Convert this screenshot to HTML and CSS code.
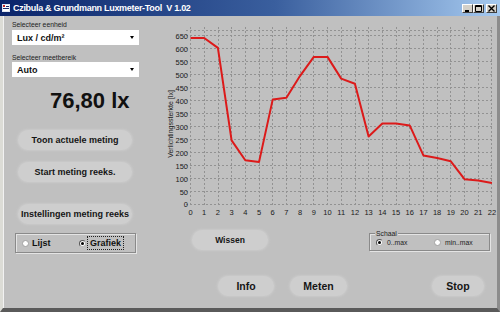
FILE: index.html
```html
<!DOCTYPE html>
<html lang="nl">
<head>
    <meta charset="UTF-8">
    <meta name="viewport" content="width=device-width, initial-scale=1.0">
    <title>Czibula &amp; Grundmann Luxmeter-Tool</title>
    <link rel="stylesheet" href="styles.css">
</head>
<body>
    <div class="window">
        <div class="titlebar">
            <svg class="app-icon" width="8" height="8" viewBox="0 0 8 8">
                <rect x="0.5" y="0.5" width="7" height="7" fill="#fff" stroke="#dfe6f2"/>
                <rect x="1" y="1" width="2" height="2" fill="#c02020"/>
                <rect x="4" y="2" width="3" height="1" fill="#1a2a6a"/>
                <rect x="1" y="4" width="6" height="1" fill="#1a2a6a"/>
            </svg>
            <span class="title">Czibula &amp; Grundmann Luxmeter-Tool&nbsp; V 1.02</span>
            <div class="caption-buttons">
                <span class="cap-btn">
                    <svg width="7" height="7" viewBox="0 0 7 7"><rect x="1" y="5" width="4" height="2" fill="#000"/></svg>
                </span>
                <span class="cap-btn">
                    <svg width="7" height="7" viewBox="0 0 7 7"><path d="M0.5 0.5h6v6h-6z M0.5 1.5h6" fill="none" stroke="#000"/></svg>
                </span>
                <span class="cap-btn close">
                    <svg width="7" height="7" viewBox="0 0 7 7"><path d="M0.5 0.5l6 6 M6.5 0.5l-6 6" stroke="#000" stroke-width="1.4"/></svg>
                </span>
            </div>
        </div>

        <div class="client">
            <div class="main">
                <div class="left">
                    <div class="label">Selecteer eenheid</div>
                    <div class="select"><span>Lux / cd/m²</span><span class="arrow"></span></div>
                    <div class="label second">Selecteer meetbereik</div>
                    <div class="select"><span>Auto</span><span class="arrow"></span></div>

                    <div class="reading">76,80 lx</div>

                    <div class="btn side first">Toon actuele meting</div>
                    <div class="btn side">Start meting reeks.</div>
                    <div class="btn side spaced">Instellingen meting reeks</div>

                    <div class="groupbox view">
                        <div class="option wide"><span class="radio"></span><b>Lijst</b></div>
                        <div class="option"><span class="radio checked"></span><b class="focus">Grafiek</b></div>
                    </div>
                </div>

                <div class="right">
                    <svg class="chart" width="340" height="208" viewBox="157 16 340 208">
                        <g class="grid">
                            <line x1="190.5" y1="27" x2="190.5" y2="205"/>
                            <line x1="204.5" y1="27" x2="204.5" y2="205"/>
                            <line x1="218.5" y1="27" x2="218.5" y2="205"/>
                            <line x1="231.5" y1="27" x2="231.5" y2="205"/>
                            <line x1="245.5" y1="27" x2="245.5" y2="205"/>
                            <line x1="259.5" y1="27" x2="259.5" y2="205"/>
                            <line x1="272.5" y1="27" x2="272.5" y2="205"/>
                            <line x1="286.5" y1="27" x2="286.5" y2="205"/>
                            <line x1="300.5" y1="27" x2="300.5" y2="205"/>
                            <line x1="313.5" y1="27" x2="313.5" y2="205"/>
                            <line x1="327.5" y1="27" x2="327.5" y2="205"/>
                            <line x1="341.5" y1="27" x2="341.5" y2="205"/>
                            <line x1="355.5" y1="27" x2="355.5" y2="205"/>
                            <line x1="368.5" y1="27" x2="368.5" y2="205"/>
                            <line x1="382.5" y1="27" x2="382.5" y2="205"/>
                            <line x1="396.5" y1="27" x2="396.5" y2="205"/>
                            <line x1="409.5" y1="27" x2="409.5" y2="205"/>
                            <line x1="423.5" y1="27" x2="423.5" y2="205"/>
                            <line x1="437.5" y1="27" x2="437.5" y2="205"/>
                            <line x1="450.5" y1="27" x2="450.5" y2="205"/>
                            <line x1="464.5" y1="27" x2="464.5" y2="205"/>
                            <line x1="478.5" y1="27" x2="478.5" y2="205"/>
                            <line x1="491.5" y1="27" x2="491.5" y2="205"/>

                            <line x1="186" y1="30.5" x2="494" y2="30.5"/>
                            <line x1="186" y1="35.5" x2="494" y2="35.5"/>
                            <line x1="186" y1="48.5" x2="494" y2="48.5"/>
                            <line x1="186" y1="61.5" x2="494" y2="61.5"/>
                            <line x1="186" y1="74.5" x2="494" y2="74.5"/>
                            <line x1="186" y1="87.5" x2="494" y2="87.5"/>
                            <line x1="186" y1="100.5" x2="494" y2="100.5"/>
                            <line x1="186" y1="113.5" x2="494" y2="113.5"/>
                            <line x1="186" y1="126.5" x2="494" y2="126.5"/>
                            <line x1="186" y1="139.5" x2="494" y2="139.5"/>
                            <line x1="186" y1="152.5" x2="494" y2="152.5"/>
                            <line x1="186" y1="165.5" x2="494" y2="165.5"/>
                            <line x1="186" y1="178.5" x2="494" y2="178.5"/>
                            <line x1="186" y1="191.5" x2="494" y2="191.5"/>
                            <line x1="186" y1="204.5" x2="494" y2="204.5"/>
                        </g>

                        <g class="ylabels">
                            <text x="188" y="38.5">650</text>
                            <text x="188" y="51.5">600</text>
                            <text x="188" y="64.5">550</text>
                            <text x="188" y="77.5">500</text>
                            <text x="188" y="90.5">450</text>
                            <text x="188" y="103.5">400</text>
                            <text x="188" y="116.5">350</text>
                            <text x="188" y="129.5">300</text>
                            <text x="188" y="142.5">250</text>
                            <text x="188" y="155.5">200</text>
                            <text x="188" y="168.5">150</text>
                            <text x="188" y="181.5">100</text>
                            <text x="188" y="194.5">50</text>
                            <text x="188" y="207">0</text>
                        </g>

                        <g class="xlabels">
                            <text x="190.5" y="215">0</text>
                            <text x="204.2" y="215">1</text>
                            <text x="217.9" y="215">2</text>
                            <text x="231.6" y="215">3</text>
                            <text x="245.3" y="215">4</text>
                            <text x="259" y="215">5</text>
                            <text x="272.7" y="215">6</text>
                            <text x="286.4" y="215">7</text>
                            <text x="300.1" y="215">8</text>
                            <text x="313.8" y="215">9</text>
                            <text x="327.5" y="215">10</text>
                            <text x="341.2" y="215">11</text>
                            <text x="354.9" y="215">12</text>
                            <text x="368.6" y="215">13</text>
                            <text x="382.3" y="215">14</text>
                            <text x="396" y="215">15</text>
                            <text x="409.7" y="215">16</text>
                            <text x="423.4" y="215">17</text>
                            <text x="437.1" y="215">18</text>
                            <text x="450.8" y="215">19</text>
                            <text x="464.5" y="215">20</text>
                            <text x="478.2" y="215">21</text>
                            <text x="491.9" y="215">22</text>
                        </g>

                        <text class="ytitle" transform="translate(173 124) rotate(-90)">Verlichtingssterkte [lx]</text>

                        <polyline class="series" points="190.5,38 204.2,38 217.9,47.9 231.6,140.4 245.3,160.3 259,162.1 272.7,99.6 286.4,97.8 300.1,75.8 313.8,56.9 327.5,56.9 341.2,78.6 354.9,83.8 368.6,136.5 382.3,123.6 396,123.6 409.7,125.4 423.4,155.4 437.1,158 450.8,161.3 464.5,179.2 478.2,180.5 491.9,183.1"/>
                    </svg>

                    <div class="chart-controls">
                        <div class="btn wissen">Wissen</div>
                        <div class="groupbox scale">
                            <span class="caption">Schaal</span>
                            <div class="options">
                                <div class="option wide"><span class="radio checked"></span>0..max</div>
                                <div class="option"><span class="radio"></span>min..max</div>
                            </div>
                        </div>
                    </div>
                </div>
            </div>

            <div class="bottombar">
                <div class="btn big info">Info</div>
                <div class="btn big meten">Meten</div>
                <div class="btn big stop">Stop</div>
            </div>
        </div>
    </div>
</body>
</html>
```

FILE: styles.css
```css
* {
    box-sizing: border-box;
    margin: 0;
    padding: 0;
}

body {
    width: 500px;
    height: 312px;
    overflow: hidden;
    background-color: #c0c0c0;
    font-family: "Liberation Sans", Arial, sans-serif;
    color: #111;
}

.window {
    width: 500px;
    height: 312px;
    display: flex;
    flex-direction: column;
    background-color: #c0c0c0;
}

/* title bar */
.titlebar {
    height: 16px;
    display: flex;
    align-items: center;
    padding: 0 3px 0 2px;
    background: linear-gradient(to right, #0a246a 0%, #3a5f9e 55%, #a6caf0 100%);
    color: #fff;
}

.app-icon {
    display: block;
    margin-right: 3px;
}

.title {
    font-size: 9px;
    font-weight: bold;
    letter-spacing: -0.3px;
    white-space: nowrap;
}

.caption-buttons {
    margin-left: auto;
    display: flex;
}

.cap-btn {
    width: 11px;
    height: 9px;
    display: flex;
    align-items: center;
    justify-content: center;
    background-color: #d4d0c8;
    border-top: 1px solid #fff;
    border-left: 1px solid #fff;
    border-right: 1px solid #404040;
    border-bottom: 1px solid #404040;
}

.cap-btn svg {
    display: block;
}

.cap-btn.close {
    margin-left: 2px;
}

/* client area */
.client {
    flex: 1;
    display: flex;
    flex-direction: column;
    border-left: 3px solid #dcdcd6;
    border-right: 3px solid #8c8c8c;
    border-bottom: 4px solid #5a5a5a;
    box-shadow: inset 1px 0 0 #f2f2f2;
}

.main {
    height: 246px;
    display: flex;
}

.left {
    width: 154px;
    padding: 5px 0 0 9px;
}

.label {
    font-size: 6.8px;
    line-height: 8px;
    color: #222;
}

.label.second {
    margin-top: 9px;
}

.select {
    width: 127px;
    height: 15px;
    margin-top: 1px;
    display: flex;
    align-items: center;
    justify-content: space-between;
    padding: 0 5px;
    background-color: #fff;
    font-size: 9px;
    font-weight: bold;
}

.label.second + .select {
    margin-top: 0;
}

.arrow {
    width: 0;
    height: 0;
    border-left: 2.5px solid transparent;
    border-right: 2.5px solid transparent;
    border-top: 3px solid #000;
}

.reading {
    height: 24px;
    margin-top: 12px;
    padding-left: 38px;
    font-size: 22px;
    line-height: 24px;
    font-weight: bold;
    color: #111;
}

.btn {
    height: 20px;
    display: flex;
    align-items: center;
    justify-content: center;
    border-radius: 10px;
    background-color: #cecece;
    box-shadow: 0 0 2px 1px #c9c9c9;
    font-weight: bold;
    font-size: 9px;
    color: #151515;
    white-space: nowrap;
}

.btn.side {
    width: 114px;
    margin-left: 6px;
    margin-top: 12px;
}

.btn.side.first {
    margin-top: 17px;
}

.btn.side.spaced {
    margin-top: 22px;
}

.groupbox {
    border: 1px solid #8a8a8a;
    box-shadow: inset 1px 1px 0 #e4e4e4, 1px 1px 0 #e4e4e4;
}

.groupbox.view {
    width: 121px;
    height: 20px;
    margin: 9px 0 0 3px;
    display: flex;
    align-items: center;
    padding-left: 6px;
    font-size: 9px;
}

.option {
    display: flex;
    align-items: center;
}

.option.wide {
    width: 57px;
}

.radio {
    width: 7px;
    height: 7px;
    margin-right: 3px;
    border-radius: 50%;
    background-color: #fff;
    border: 1px solid #a0a0a0;
    display: flex;
    align-items: center;
    justify-content: center;
}

.radio.checked {
    border-color: #555 #bbb #bbb #555;
}

.radio.checked::after {
    content: "";
    width: 3px;
    height: 3px;
    border-radius: 50%;
    background-color: #000;
}

.focus {
    outline: 1px dotted #222;
    outline-offset: 1px;
    padding: 0 1px;
}

/* chart column */
.right {
    flex: 1;
    display: flex;
    flex-direction: column;
}

.chart {
    display: block;
    font-family: "Liberation Sans", Arial, sans-serif;
}

.grid line {
    stroke: #929292;
    stroke-width: 1;
    stroke-dasharray: 2 2;
}

.ylabels text {
    font-size: 7.5px;
    fill: #1a1a1a;
    text-anchor: end;
}

.xlabels text {
    font-size: 7.5px;
    fill: #1a1a1a;
    text-anchor: middle;
}

.ytitle {
    font-size: 7px;
    fill: #1a1a1a;
    text-anchor: middle;
}

.series {
    fill: none;
    stroke: #dc1a1a;
    stroke-width: 2;
    stroke-linejoin: round;
}

.chart-controls {
    display: flex;
    align-items: flex-start;
    margin-top: 6px;
    padding: 0 7px 0 35px;
}

.btn.wissen {
    width: 76px;
    font-size: 8.5px;
}

.groupbox.scale {
    width: 121px;
    height: 18px;
    margin: 3px 0 0 auto;
    display: flex;
    flex-direction: column;
    align-items: flex-start;
    font-size: 6.8px;
    color: #222;
}

.scale .caption {
    height: 7px;
    line-height: 7px;
    margin: -4px 0 0 5px;
    padding: 0 1px;
    background-color: #c0c0c0;
}

.scale .options {
    height: 10px;
    display: flex;
    align-items: center;
    padding-left: 6px;
}

.scale .option.wide {
    width: 58px;
}

.scale .radio {
    margin-right: 4px;
}

/* bottom buttons */
.bottombar {
    display: flex;
    padding-top: 14px;
}

.btn.big {
    font-size: 10.5px;
}

.btn.info {
    width: 56px;
    margin-left: 215px;
}

.btn.meten {
    width: 57px;
    margin-left: 16px;
}

.btn.stop {
    width: 52px;
    margin-left: 85px;
}
```
